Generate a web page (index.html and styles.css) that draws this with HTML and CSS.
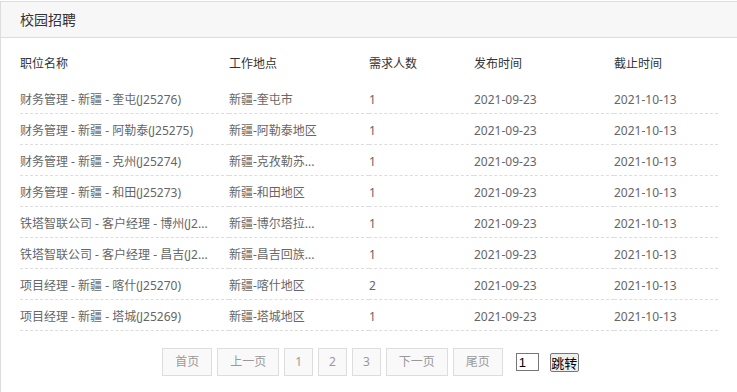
FILE: index.html
```html
<!DOCTYPE html>
<html lang="zh-CN">
<head>
<meta charset="utf-8">
<title>校园招聘</title>
<link rel="stylesheet" href="styles.css">
</head>
<body>
<div class="panel">
  <div class="panel-head">校园招聘</div>
  <div class="panel-body">
    <table class="jobs">
      <colgroup>
        <col class="c1"><col class="c2"><col class="c3"><col class="c4"><col class="c5">
      </colgroup>
      <thead>
        <tr><th>职位名称</th><th>工作地点</th><th>需求人数</th><th>发布时间</th><th>截止时间</th></tr>
      </thead>
      <tbody>
        <tr><td>财务管理 - 新疆 - 奎屯(J25276)</td><td>新疆-奎屯市</td><td>1</td><td>2021-09-23</td><td>2021-10-13</td></tr>
        <tr><td>财务管理 - 新疆 - 阿勒泰(J25275)</td><td>新疆-阿勒泰地区</td><td>1</td><td>2021-09-23</td><td>2021-10-13</td></tr>
        <tr><td>财务管理 - 新疆 - 克州(J25274)</td><td>新疆-克孜勒苏...</td><td>1</td><td>2021-09-23</td><td>2021-10-13</td></tr>
        <tr><td>财务管理 - 新疆 - 和田(J25273)</td><td>新疆-和田地区</td><td>1</td><td>2021-09-23</td><td>2021-10-13</td></tr>
        <tr><td>铁塔智联公司 - 客户经理 - 博州(J2...</td><td>新疆-博尔塔拉...</td><td>1</td><td>2021-09-23</td><td>2021-10-13</td></tr>
        <tr><td>铁塔智联公司 - 客户经理 - 昌吉(J2...</td><td>新疆-昌吉回族...</td><td>1</td><td>2021-09-23</td><td>2021-10-13</td></tr>
        <tr><td>项目经理 - 新疆 - 喀什(J25270)</td><td>新疆-喀什地区</td><td>2</td><td>2021-09-23</td><td>2021-10-13</td></tr>
        <tr><td>项目经理 - 新疆 - 塔城(J25269)</td><td>新疆-塔城地区</td><td>1</td><td>2021-09-23</td><td>2021-10-13</td></tr>
      </tbody>
    </table>
    <div class="pager">
      <a class="pg">首页</a>
      <a class="pg">上一页</a>
      <a class="pg num">1</a>
      <a class="pg num">2</a>
      <a class="pg num">3</a>
      <a class="pg">下一页</a>
      <a class="pg">尾页</a>
      <input class="pg-input" type="text" value="1">
      <button class="pg-go" type="button">跳转</button>
    </div>
  </div>
</div>
</body>
</html>
```
FILE: styles.css
```css
html, body {
  margin: 0;
  padding: 0;
  background: #fff;
}
body {
  font-family: "Noto Sans", "Noto Sans CJK SC", sans-serif;
  font-size: 12px;
  color: #666;
}
.panel {
  margin-top: 1px;
  width: 738px;
  border: 1px solid #ddd;
  border-bottom: none;
  box-sizing: border-box;
  height: 391px;
}
.panel-head {
  height: 35px;
  line-height: 35px;
  background: #f7f7f7;
  border-bottom: 1px solid #ddd;
  padding-left: 19px;
  font-size: 14px;
  color: #333;
}
.panel-body {
  padding: 0 18px 0 19px;
}
.jobs {
  width: 698px;
  table-layout: fixed;
  border-collapse: collapse;
}
.c1 { width: 209px; }
.c2 { width: 140px; }
.c3 { width: 105px; }
.c4 { width: 140px; }
.c5 { width: 104px; }
.jobs th {
  text-align: left;
  font-weight: normal;
  color: #333;
  line-height: 20px;
  padding: 16px 0 9px;
}
.jobs td {
  line-height: 20px;
  padding: 7px 0 3px;
  border-bottom: 1px dashed #ddd;
  white-space: nowrap;
  overflow: hidden;
}
.pager {
  display: flex;
  justify-content: center;
  align-items: center;
  gap: 5px;
  margin-top: 17px;
  padding-left: 2px;
}
.pg {
  display: inline-block;
  height: 26px;
  line-height: 26px;
  padding: 0 12px;
  border: 1px solid #ddd;
  background: #f9f9f9;
  color: #999;
  cursor: pointer;
}
.pg.num {
  padding: 0 10px;
}
.pg-input {
  box-sizing: border-box;
  width: 23px;
  height: 18px;
  padding: 0 2px;
  margin-left: 8px;
  border: 1px solid #767676;
  font-size: 13px;
  font-family: "Liberation Sans", sans-serif;
  color: #000;
}
.pg-go {
  box-sizing: border-box;
  height: 19px;
  width: 29px;
  padding: 0;
  border: 1px solid #767676;
  border-radius: 2px;
  background: #efefef;
  font-size: 13px;
  line-height: 15px;
  font-family: "Noto Sans CJK SC", sans-serif;
  color: #000;
  margin-left: 6px;
}
```
